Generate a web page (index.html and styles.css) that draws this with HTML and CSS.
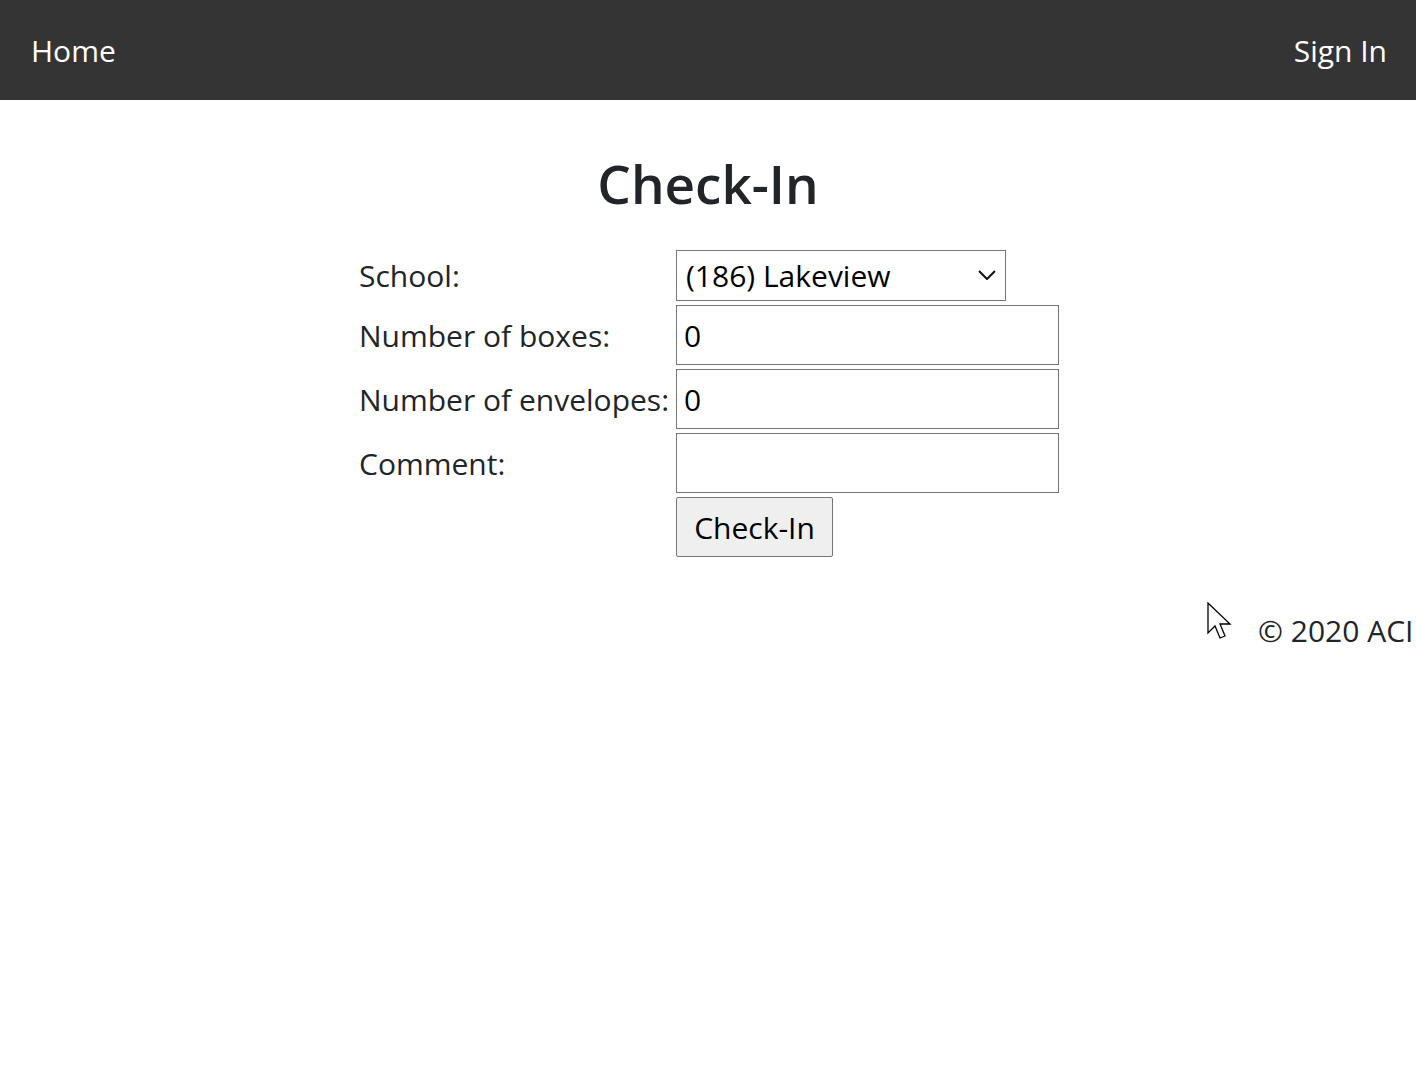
FILE: index.html
```html
<!DOCTYPE html>
<html>
<head>
<meta charset="utf-8">
<link rel="stylesheet" href="styles.css">
</head>
<body>
<nav class="navbar">
  <a class="nav-link" href="#">Home</a>
  <a class="nav-link" href="#">Sign In</a>
</nav>
<main class="content">
  <h1 class="title">Check-In</h1>
  <form class="form">
    <label class="label">School:</label>
    <div class="select-wrap">
      <select class="select"><option>(186) Lakeview</option></select>
      <svg class="chevron" width="18" height="10" viewBox="0 0 18 10"><path d="M1 1 L9 9 L17 1" fill="none" stroke="#111" stroke-width="2"/></svg>
    </div>
    <label class="label">Number of boxes:</label>
    <input class="input" type="text" value="0">
    <label class="label">Number of envelopes:</label>
    <input class="input" type="text" value="0">
    <label class="label">Comment:</label>
    <input class="input" type="text" value="">
    <span></span>
    <div><button class="button" type="button">Check-In</button></div>
  </form>
</main>
<footer class="footer">
  <svg class="cursor" width="26" height="40" viewBox="0 0 26 40"><path d="M1 1 L1 31 L8 24 L13 36 L18 34 L13 22 L23 22 Z" fill="#fff" stroke="#000" stroke-width="1.3" stroke-linejoin="miter"/></svg>
  <span class="copy">© 2020 ACI</span>
</footer>
</body>
</html>
```
FILE: styles.css
```css
html, body {
  margin: 0;
  padding: 0;
  overflow: hidden;
}
body {
  font-family: "Open Sans", "Noto Sans", sans-serif;
  color: #212529;
  background: #fff;
  width: 1416px;
  height: 1082px;
}
.navbar {
  height: 100px;
  background: #343434;
  display: flex;
  justify-content: space-between;
  align-items: center;
  padding: 0 29px 0 31px;
  box-sizing: border-box;
}
.nav-link {
  color: #fff;
  text-decoration: none;
  font-size: 30px;
}
.content {
  display: flex;
  flex-direction: column;
  align-items: center;
}
.title {
  margin: 48px 0 30px;
  font-size: 53px;
  font-weight: 600;
  line-height: 72px;
  color: #212529;
}
.form {
  display: grid;
  grid-template-columns: 317px 383px;
  row-gap: 4px;
  align-items: center;
  margin-left: 2px;
}
.label {
  font-size: 30px;
  color: #212529;
}
.select-wrap {
  position: relative;
  width: 330px;
  height: 51px;
}
.select {
  appearance: none;
  -webkit-appearance: none;
  width: 330px;
  height: 51px;
  border: 1px solid #767676;
  border-radius: 0;
  background: #fff;
  font-family: inherit;
  font-size: 30px;
  color: #000;
  padding: 0 0 0 9px;
  box-sizing: border-box;
}
.chevron {
  position: absolute;
  right: 10px;
  top: 20px;
}
.input {
  width: 383px;
  height: 60px;
  border: 1px solid #767676;
  box-sizing: border-box;
  font-family: inherit;
  font-size: 30px;
  color: #000;
  padding: 0 0 0 7px;
  margin: 0;
}
.button {
  height: 60px;
  width: 157px;
  background: #efefef;
  border: 1px solid #767676;
  border-radius: 2px;
  font-family: inherit;
  font-size: 30px;
  color: #000;
  padding: 0;
}
.footer {
  position: relative;
  margin-top: 46px;
  padding-left: 1258px;
  white-space: nowrap;
  height: 50px;
}
.copy {
  display: inline-block;
  font-size: 30px;
  color: #212529;
  padding-top: 7px;
}
.cursor {
  position: absolute;
  left: 1207px;
  top: -1px;
}
```
